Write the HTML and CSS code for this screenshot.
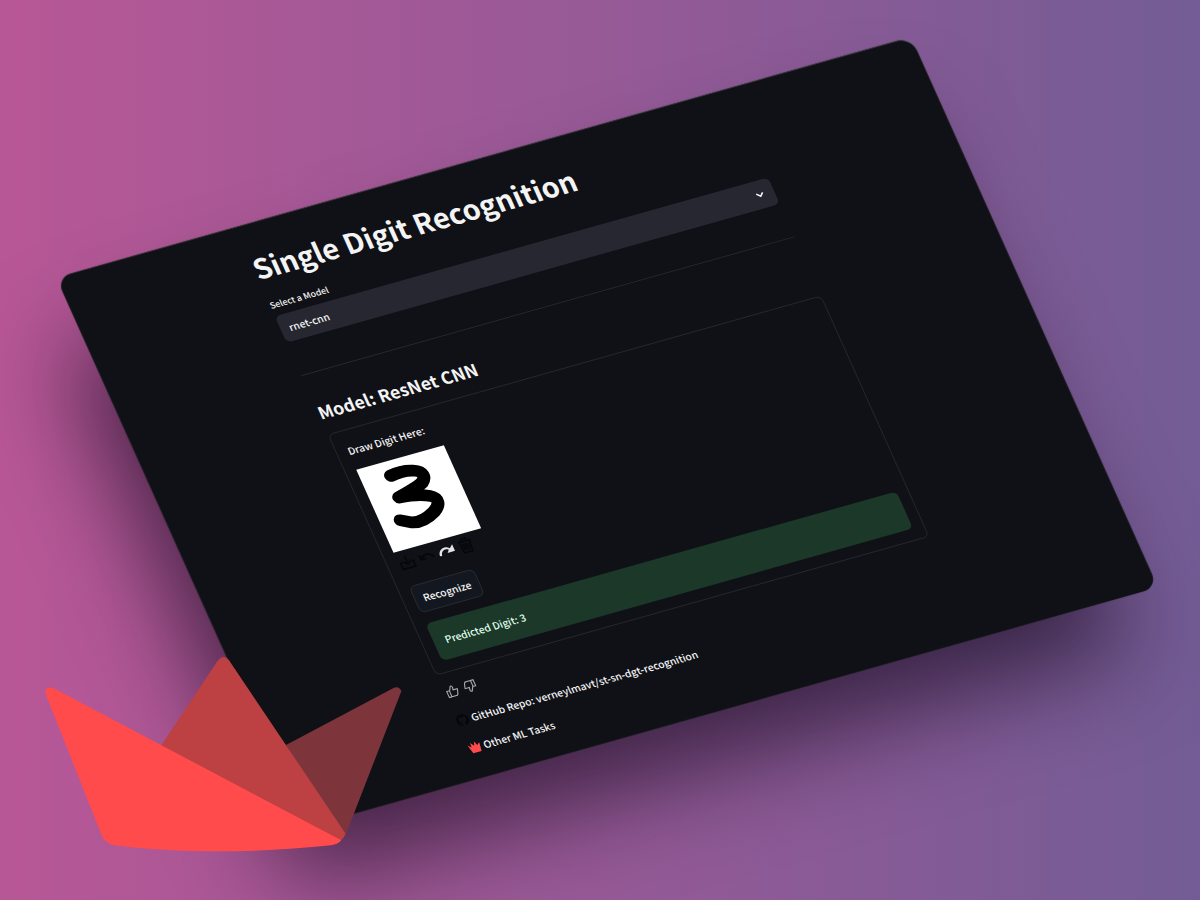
FILE: index.html
```html
<!DOCTYPE html>
<html lang="en">
<head>
<meta charset="utf-8">
<meta name="viewport" content="width=device-width, initial-scale=1">
<title>Single Digit Recognition</title>
<link rel="stylesheet" href="styles.css">
</head>
<body>
<main class="window">
  <div class="column">
    <h1 class="title">Single Digit Recognition</h1>
    <div class="field">
      <label class="field-label" for="model">Select a Model</label>
      <div class="select-wrap">
        <select class="select" id="model"><option>rnet-cnn</option></select>
        <svg class="chevron" viewBox="0 0 16 16" aria-hidden="true"><path d="M3.500 6 8 10.500 12.500 6"/></svg>
      </div>
    </div>
    <hr class="divider">
    <h2 class="subtitle">Model: ResNet CNN</h2>
    <form class="card">
      <p class="text">Draw Digit Here:</p>
      <svg class="drawing" viewBox="0 0 125 125" role="img" aria-label="Handwritten digit 3"><path d="M40 21C51 19 63 19 73 23 84 27 85 35 76 42 67 47 53 49 38 53 52 54 67 56 79 63 88 68 88 77 75 85 64 91 51 95 40 91L27 84"/></svg>
      <div class="tools">
        <button class="tool" type="button" aria-label="Download"><svg viewBox="0 0 24 24"><path d="M6 12H3v9h18v-9h-3M12 3v13M7 11l5 5 5-5"/></svg></button>
        <button class="tool" type="button" aria-label="Undo"><svg viewBox="0 0 24 24"><path class="solid" d="M12.500 8c-2.650 0-5.050.990-6.900 2.600L2 7v9h9l-3.620-3.620c1.390-1.160 3.160-1.880 5.120-1.880 3.540 0 6.550 2.310 7.600 5.500l2.370-.780C21.080 11.030 17.150 8 12.500 8z"/></svg></button>
        <button class="tool tool-on" type="button" aria-label="Redo"><svg viewBox="0 0 24 24"><path class="solid" d="M18 10C16 8 14 7 11.500 7 6 7 1.500 11 1 17l3 .500C4.500 13 8 10 11.500 10c1.700 0 3 .500 4.200 1.700L12.500 15.500H23V5.500z"/></svg></button>
        <button class="tool" type="button" aria-label="Clear"><svg viewBox="0 0 24 24"><path d="M3 6h18M9 5V2h6v3M5 7l1 15h12l1-15M9 9v10M12 9v10M15 9v10"/></svg></button>
      </div>
      <button class="submit" type="button">Recognize</button>
      <p class="alert" role="status">Predicted Digit: 3</p>
    </form>
    <div class="votes">
      <button class="vote" type="button" aria-label="Good"><svg viewBox="0 0 24 24"><path d="M2 10h5v12H2zM7 11l5-9c2 0 3 1 3 3l-1 5h8l-1 4-2 6-2 2H7"/></svg></button>
      <button class="vote vote-down" type="button" aria-label="Bad"><svg viewBox="0 0 24 24"><path d="M2 10h5v12H2zM7 11l5-9c2 0 3 1 3 3l-1 5h8l-1 4-2 6-2 2H7"/></svg></button>
    </div>
    <p class="link-row"><svg class="mark mark-dark" viewBox="0 0 16 16" aria-hidden="true"><path d="M8 0C3.580 0 0 3.580 0 8c0 3.540 2.290 6.530 5.470 7.590.4.070.550-.170.550-.380 0-.190-.010-.820-.010-1.490-2.010.370-2.530-.490-2.690-.940-.090-.230-.480-.940-.820-1.130-.280-.150-.680-.520-.010-.530.630-.010 1.080.580 1.230.820.720 1.210 1.870.870 2.330.660.070-.520.280-.870.510-1.070-1.780-.2-3.640-.890-3.640-3.950 0-.870.310-1.590.820-2.150-.080-.2-.360-1.020.080-2.120 0 0 .670-.210 2.200.820a7.600 7.600 0 0 1 4 0c1.530-1.040 2.200-.820 2.200-.820.440 1.100.160 1.920.080 2.120.510.560.820 1.270.820 2.150 0 3.070-1.870 3.750-3.650 3.950.290.250.540.730.540 1.480 0 1.070-.010 1.930-.010 2.200 0 .210.150.460.550.380A8 8 0 0 0 16 8c0-4.420-3.580-8-8-8z"/></svg><a class="link" href="#repo">GitHub Repo: verneylmavt/st-sn-dgt-recognition</a></p>
    <p class="link-row"><svg class="mark mark-red" viewBox="0 0 16 16" aria-hidden="true"><path d="M0 3 4 7 4.500 1 8 6 10 0 12 6 16 3 14 15H3z"/></svg><a class="link" href="#tasks">Other ML Tasks</a></p>
  </div>
</main>
<svg class="crown" viewBox="0 0 1170 690" role="img" aria-label="Crown logo">
  <path class="crown-right" d="M768 315 1092 143Q1108 138 1114 154L948 582 930 602z"/>
  <path class="crown-mid" d="M393 317 562 64Q580 40 597 61L946 580Q945 592 932 602L700 560z"/>
  <path class="crown-left" d="M47 162C43 147 57 138 71 145L934 601Q924 613 904 616C700 638 460 642 252 616Q225 608 216 588z"/>
</svg>
</body>
</html>
```
FILE: styles.css
```css
* { box-sizing: border-box; }
body {
  margin: 0;
  min-height: 100vh;
  overflow: hidden;
  position: relative;
  background: linear-gradient(to right, #b85796, #955a97 52%, #735c95);
  color: #f4f4f5;
  font-family: "Noto Sans CJK SC", "Noto Sans", sans-serif;
  font-size: 14px;
  font-weight: 500;
  line-height: 24px;
}
h1, h2, p { margin: 0; }
button { padding: 0; border: 0; background: none; color: inherit; font: inherit; }
svg { display: block; }

/* Tilted application window */
.window {
  position: absolute;
  left: 57px;
  top: 278px;
  width: 1218px;
  width: 101.5vw;
  padding: 31px 6px 31px 0;
  border-radius: 20px;
  background: #0f1116;
  box-shadow: 0 -1px 1px #3a3a3e, 0 0 1px 1px #1a1a1e, -50px 88px 130px -16px rgb(22 10 30 / 66%);
  transform: matrix(0.7008, -0.1973, 0.2982, 0.6642, 0, 0);
  transform-origin: 0 0;
}
.column { max-width: 704px; margin: 0 auto; }
.title { font-size: 39px; line-height: 62px; font-weight: 700; }
.field { padding-top: 14px; }
.field-label { display: block; font-size: 12px; line-height: 20px; height: 26px; }
.select-wrap { position: relative; }
.select {
  display: block;
  width: 100%;
  height: 40px;
  padding: 0 12px;
  border: 0;
  border-radius: 8px;
  background: #262730;
  color: inherit;
  font: inherit;
  appearance: none;
}
.chevron { position: absolute; right: 12px; top: 12px; width: 16px; fill: none; stroke: #fafafa; stroke-width: 2; }
.divider { margin: 49px 0 40px; border: 0; border-top: 1px solid #2c2d32; }
.subtitle { font-size: 24px; line-height: 32px; font-weight: 700; }
.card { margin-top: 16px; padding: 16px 15px; border: 1px solid #2c2d32; border-radius: 8px; }
.text { padding: 1px 0 16px; }
.drawing { width: 125px; height: 125px; background: #fff; fill: none; stroke: #000; stroke-width: 17; stroke-linecap: round; stroke-linejoin: round; }
.tools { display: flex; gap: 4px; padding-top: 5px; }
.tool { width: 24px; height: 24px; color: #050609; }
.tool svg, .vote svg { width: 100%; fill: none; stroke: currentColor; stroke-width: 2; }
.tool .solid { fill: currentColor; stroke: none; }
.tool-on { color: #e4e4e6; }
.submit { display: block; height: 40px; margin-top: 22px; padding: 0 11px; border: 1px solid #2f3137; border-radius: 8px; background: #131720; }
.alert { margin-top: 16px; padding: 16px; border-radius: 8px; background: #1c3829; color: #dffde9; }
.votes { display: flex; gap: 7px; padding: 18px 0 0 3px; }
.vote { width: 18px; height: 18px; color: #a8a9ac; }
.vote-down { transform: rotate(180deg); }
.link-row { display: flex; align-items: center; gap: 4px; padding-top: 17px; }
.votes + .link-row { padding-top: 21px; }
.link { color: inherit; text-decoration: none; }
.mark { width: 17px; height: 17px; }
.mark-dark { fill: #050609; }
.mark-red { fill: #ff4b4b; }

/* Logo over the corner of the window */
.crown { position: absolute; left: 30px; bottom: 30px; width: 390px; }
.crown-left { fill: #ff4b4b; }
.crown-mid { fill: #bd4043; }
.crown-right { fill: #7d353b; }
```
